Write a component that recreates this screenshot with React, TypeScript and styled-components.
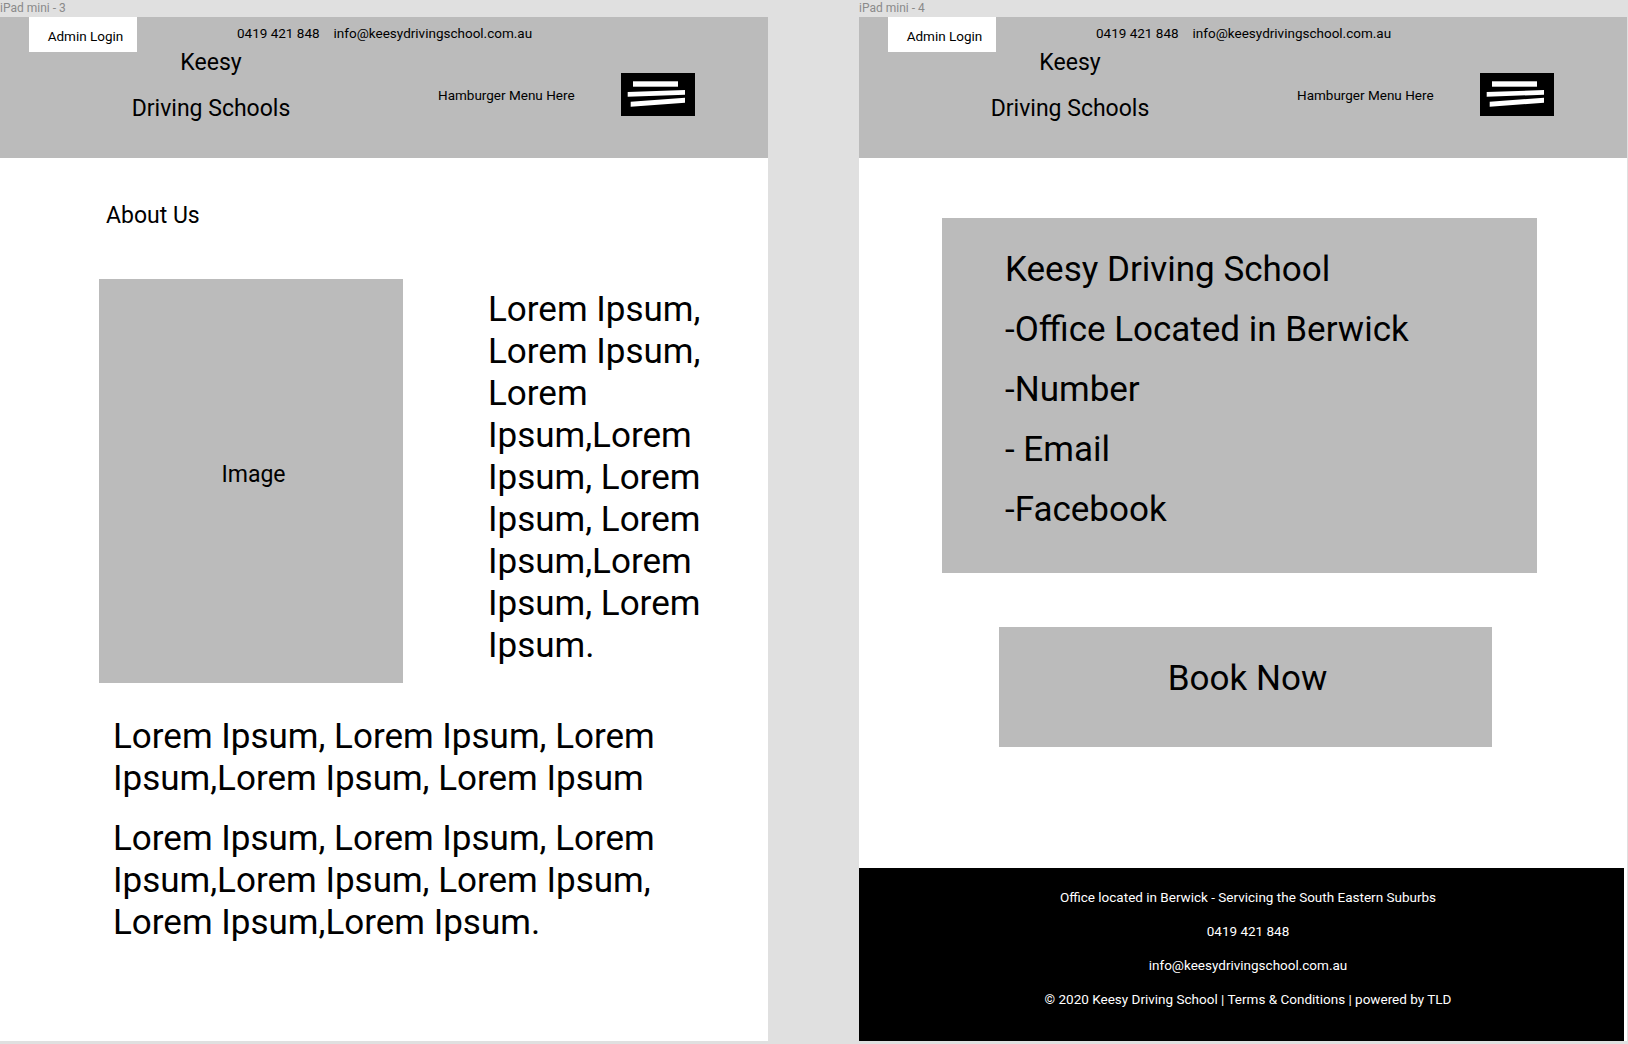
import React from 'react';
import styled, { createGlobalStyle } from 'styled-components';

const GlobalStyle = createGlobalStyle`
  html, body {
    margin: 0;
    padding: 0;
    background: #e0e0e0;
    font-family: Roboto, 'Liberation Sans', Arial, sans-serif;
    color: #000;
  }
`;

const Page = styled.div`
  display: flex;
  gap: 91px;
  align-items: flex-start;
  min-height: 1044px;
`;

const Artboard = styled.div`
  display: flex;
  flex-direction: column;
  width: 768px;
`;

const ArtboardLabel = styled.div`
  height: 17px;
  line-height: 17px;
  font-size: 12px;
  color: #8a8a8a;
  white-space: nowrap;
`;

const Screen = styled.div`
  display: flex;
  flex-direction: column;
  height: 1024px;
  background: #fff;
`;

/* header */

const HeaderBar = styled.header`
  display: flex;
  flex-direction: column;
  height: 141px;
  flex-shrink: 0;
  background: #bbbbbb;
`;

const TopRow = styled.div`
  display: flex;
  align-items: flex-start;
  height: 35px;
`;

const AdminLogin = styled.a`
  display: flex;
  align-items: center;
  justify-content: center;
  width: 108px;
  height: 35px;
  margin-left: 29px;
  padding: 3px 0 0 5px;
  box-sizing: border-box;
  background: #fff;
  font-size: 13.5px;
  color: #000;
  text-decoration: none;
`;

const ContactLine = styled.div`
  display: flex;
  gap: 14px;
  margin-left: 100px;
  padding-top: 8px;
  font-size: 13.5px;
  line-height: 16px;
`;

const MainRow = styled.div`
  display: flex;
  align-items: flex-start;
  margin-top: -12px;
`;

const Brand = styled.div`
  width: 222px;
  margin-left: 100px;
  text-align: center;
  font-size: 23px;
  line-height: 46px;
`;

const MenuGroup = styled.div`
  display: flex;
  align-items: center;
  gap: 46px;
  margin-left: 116px;
  margin-top: 33px;
`;

const MenuLabel = styled.span`
  font-size: 13.5px;
  line-height: 16px;
`;

const MenuButton = styled.button`
  display: block;
  width: 74px;
  height: 43px;
  padding: 0;
  border: 0;
  background: #000;
  cursor: pointer;
`;

const Hamburger = () => (
  <MenuButton aria-label="Menu">
    <svg width="74" height="43" viewBox="0 0 74 43">
      <rect x="12" y="8.3" width="45" height="5.4" fill="#fff" />
      <polygon points="6.7,19 64,17 64,21.7 6.7,23.7" fill="#fff" />
      <polygon points="9.7,28.7 64,24.7 64,29.7 9.7,33.7" fill="#fff" />
    </svg>
  </MenuButton>
);

const Header = () => (
  <HeaderBar>
    <TopRow>
      <AdminLogin href="#">Admin Login</AdminLogin>
      <ContactLine>
        <span>0419 421 848</span>
        <span>info@keesydrivingschool.com.au</span>
      </ContactLine>
    </TopRow>
    <MainRow>
      <Brand>
        <div>Keesy</div>
        <div>Driving Schools</div>
      </Brand>
      <MenuGroup>
        <MenuLabel>Hamburger Menu Here</MenuLabel>
        <Hamburger />
      </MenuGroup>
    </MainRow>
  </HeaderBar>
);

/* about page */

const SectionTitle = styled.h2`
  margin: 43.5px 0 0 106px;
  font-size: 23px;
  font-weight: 400;
  line-height: 27px;
`;

const AboutRow = styled.div`
  display: flex;
  align-items: flex-start;
  gap: 85px;
  margin: 50.5px 0 0 99px;
`;

const ImageBox = styled.div`
  display: flex;
  align-items: center;
  justify-content: center;
  width: 304px;
  height: 404px;
  box-sizing: border-box;
  padding: 0 0 13px 5px;
  background: #bbbbbb;
  font-size: 23px;
`;

const BigText = styled.p<{ $width: number }>`
  width: ${(p) => p.$width}px;
  margin: 0;
  font-size: 35px;
  line-height: 42px;
`;

const SideText = styled(BigText)`
  margin-top: 10px;
`;

const Paragraphs = styled.div`
  display: flex;
  flex-direction: column;
  gap: 18px;
  margin: 33px 0 0 113px;
`;

const lorem = 'Lorem Ipsum, Lorem Ipsum, Lorem Ipsum,Lorem Ipsum, Lorem Ipsum, Lorem Ipsum,Lorem Ipsum, Lorem Ipsum.';

/* contact page */

const InfoCard = styled.div`
  display: flex;
  flex-direction: column;
  width: 595px;
  height: 355px;
  box-sizing: border-box;
  margin: 60px 0 0 83px;
  padding: 22px 0 0 63px;
  background: #bbbbbb;
  font-size: 35px;
  line-height: 60px;
`;

const BookButton = styled.button`
  display: flex;
  justify-content: center;
  align-items: flex-start;
  align-self: flex-start;
  width: 493px;
  height: 120px;
  box-sizing: border-box;
  margin: 54px 0 0 140px;
  padding: 31px 0 0 4px;
  border: 0;
  background: #bbbbbb;
  font-family: inherit;
  font-size: 35px;
  line-height: 42px;
  color: #000;
  cursor: pointer;
`;

const Footer = styled.footer`
  display: flex;
  flex-direction: column;
  align-items: center;
  height: 173px;
  box-sizing: border-box;
  margin: auto 3px 0 0;
  padding: 12px 0 0 13px;
  background: #000;
  color: #fff;
  font-size: 13.5px;
  line-height: 34px;
`;

const infoLines = ['Keesy Driving School', '-Office Located in Berwick', '-Number', '- Email', '-Facebook'];

const footerLines = [
  'Office located in Berwick - Servicing the South Eastern Suburbs',
  '0419 421 848',
  'info@keesydrivingschool.com.au',
  '© 2020 Keesy Driving School | Terms & Conditions | powered by TLD',
];

export default function App() {
  return (
    <>
      <GlobalStyle />
      <Page>
        <Artboard>
          <ArtboardLabel>iPad mini - 3</ArtboardLabel>
          <Screen>
            <Header />
            <SectionTitle>About Us</SectionTitle>
            <AboutRow>
              <ImageBox>Image</ImageBox>
              <SideText $width={230}>{lorem}</SideText>
            </AboutRow>
            <Paragraphs>
              <BigText $width={580}>Lorem Ipsum, Lorem Ipsum, Lorem Ipsum,Lorem Ipsum, Lorem Ipsum</BigText>
              <BigText $width={580}>Lorem Ipsum, Lorem Ipsum, Lorem Ipsum,Lorem Ipsum, Lorem Ipsum, Lorem Ipsum,Lorem Ipsum.</BigText>
            </Paragraphs>
          </Screen>
        </Artboard>
        <Artboard>
          <ArtboardLabel>iPad mini - 4</ArtboardLabel>
          <Screen>
            <Header />
            <InfoCard>
              {infoLines.map((line) => (
                <div key={line}>{line}</div>
              ))}
            </InfoCard>
            <BookButton>Book Now</BookButton>
            <Footer>
              {footerLines.map((line) => (
                <div key={line}>{line}</div>
              ))}
            </Footer>
          </Screen>
        </Artboard>
      </Page>
    </>
  );
}
